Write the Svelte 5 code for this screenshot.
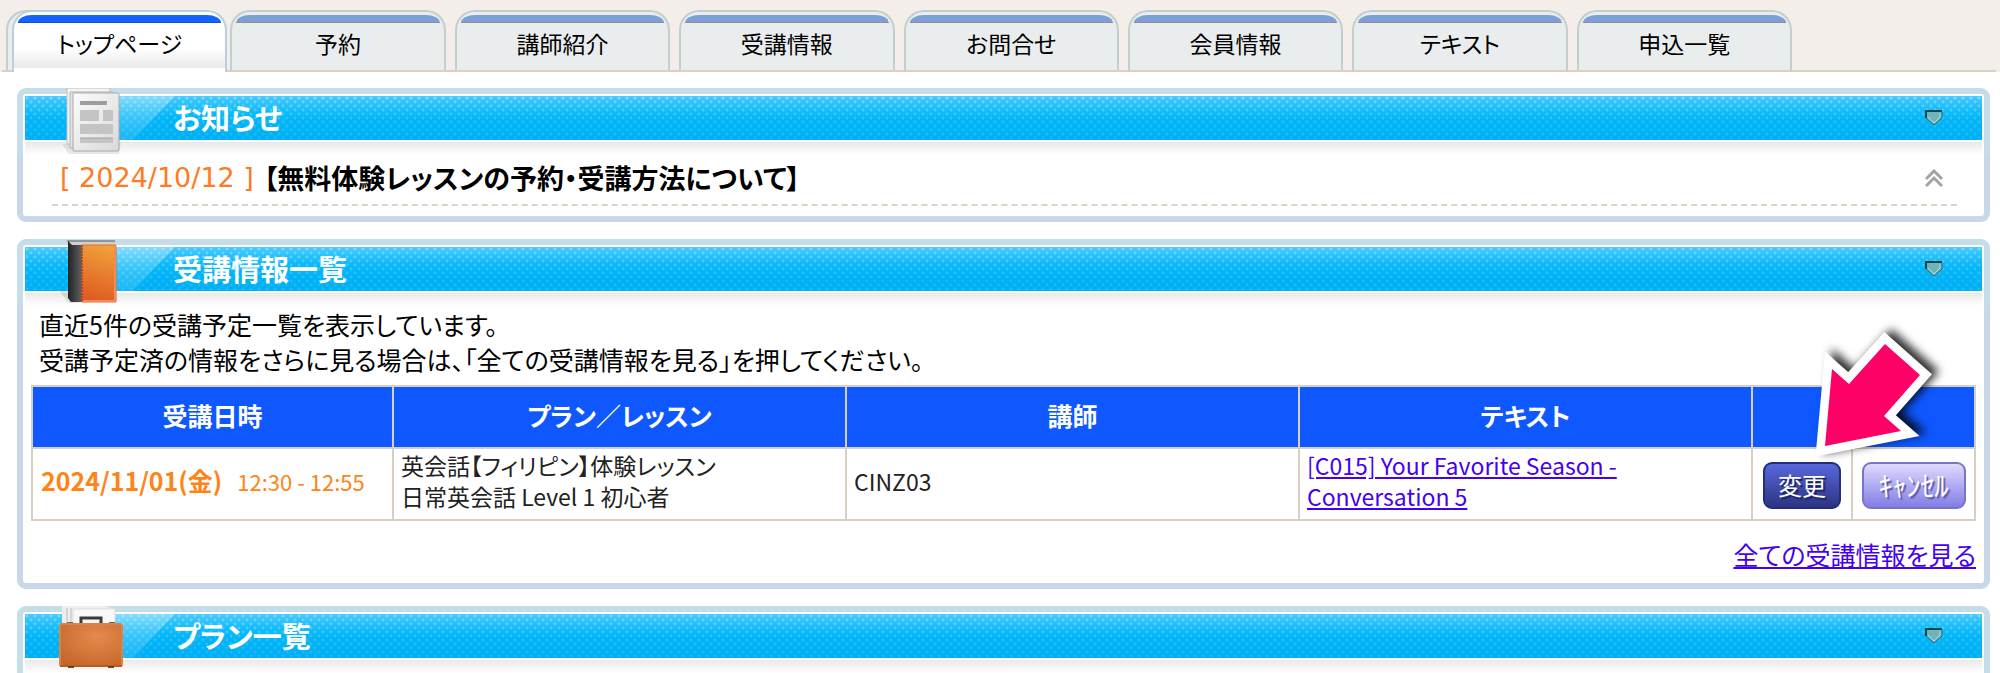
<script lang="ts">
	const tabs = [
		'トップページ',
		'予約',
		'講師紹介',
		'受講情報',
		'お問合せ',
		'会員情報',
		'テキスト',
		'申込一覧'
	];

	const lessons = [
		{
			date: '2024/11/01(金)',
			time: '12:30 - 12:55',
			plan: ['英会話【フィリピン】体験レッスン', '日常英会話 Level 1 初心者'],
			teacher: 'CINZ03',
			text: '[C015] Your Favorite Season - Conversation 5'
		}
	];

	let current = $state(0);
</script>

{#snippet marker()}
	<button type="button" class="marker" aria-label="開閉">
		<svg width="18" height="16" viewBox="0 0 18 16" aria-hidden="true">
			<path d="M1 1H17V8L9 15L1 8Z" fill="#6db4bd" />
			<path d="M1 8V1H17" fill="none" stroke="#14484c" stroke-width="2" />
			<path d="M1 8L9 15L17 8V2" fill="none" stroke="#2b6b6c" stroke-width="1" />
			<path d="M3 7L9 13L15 7V3" fill="none" stroke="#a9dcdc" stroke-width="1" />
		</svg>
	</button>
{/snippet}

<div class="page">
	<header>
		<nav aria-label="メインメニュー">
			{#each tabs as tab, i}
				<div class="slot" class:active={i === current}>
					<a href="#tab{i}" onclick={() => (current = i)} aria-current={i === current ? 'page' : undefined}>
						{tab}
					</a>
				</div>
			{/each}
		</nav>
	</header>

	<main>
		<section class="panel">
			<div class="bar">
				<h2>お知らせ</h2>
				{@render marker()}
			</div>
			<svg class="icon" width="70" height="72" viewBox="0 0 70 72" aria-hidden="true">
				<defs>
					<linearGradient id="paper" x1="0" y1="0" x2="1" y2="1">
						<stop offset="0" stop-color="#fcfcfc" />
						<stop offset="1" stop-color="#d9d9d9" />
					</linearGradient>
				</defs>
				<path d="M7 56L66 54L64 66H14Z" fill="#000" opacity=".08" />
				<path d="M12 0H55V56H12Z" fill="#f4f4f4" stroke="#bdbdbd" />
				<path d="M15 4H58V60H15Z" fill="#e4e4e4" stroke="#b2b2b2" />
				<rect x="18" y="5" width="46" height="58" rx="1" fill="url(#paper)" stroke="#a9a9a9" />
				<path d="M25 13H52V17H25Z" fill="#9d9d9d" />
				<path d="M25 22H44V33H25ZM48 22H58V33H48ZM25 36H58V46H25ZM25 50H58V55H25Z" fill="#c4c4c4" />
				<path d="M25 50H58" stroke="#a2a2a2" />
			</svg>
			<div class="news">
				<span class="news-date">[ 2024/10/12 ]</span>
				<strong>【無料体験レッスンの予約・受講方法について】</strong>
				<button type="button" class="fold" aria-label="閉じる">
					<svg width="18" height="18" viewBox="0 0 18 18" aria-hidden="true">
						<path d="M1 10L9 2L17 10M1 17L9 9L17 17" fill="none" stroke="#a3a3a3" stroke-width="3" />
					</svg>
				</button>
			</div>
		</section>

		<section class="panel">
			<div class="bar">
				<h2>受講情報一覧</h2>
				{@render marker()}
			</div>
			<svg class="icon" width="70" height="72" viewBox="0 0 70 72" aria-hidden="true">
				<defs>
					<linearGradient id="cover" x1=".6" y1="0" x2=".4" y2="1">
						<stop offset="0" stop-color="#f0a03a" />
						<stop offset="1" stop-color="#de5a20" />
					</linearGradient>
					<linearGradient id="spine" x1="0" y1="0" x2="1" y2="0">
						<stop offset="0" stop-color="#222" />
						<stop offset=".4" stop-color="#777" />
						<stop offset="1" stop-color="#444" />
					</linearGradient>
				</defs>
				<path d="M4 52H62V62L14 64Z" fill="#000" opacity=".1" />
				<path d="M13 2H60V7H13Z" fill="#d0d0d0" />
				<path d="M12 2H60" stroke="#555" />
				<path d="M13 2L17 6H60V63H16L13 59Z" fill="url(#spine)" />
				<path d="M27 6H61V63H27Z" fill="url(#cover)" stroke="#e8683b" stroke-width="1" />
				<path d="M27 6V63" stroke="#803010" stroke-dasharray="2 1" />
				<path d="M28 62H60V6" fill="none" stroke="#f28a5a" stroke-width="2" />
			</svg>
			<div class="lessons">
				<p>
					直近5件の受講予定一覧を表示しています。<br />
					受講予定済の情報をさらに見る場合は、「全ての受講情報を見る」を押してください。
				</p>
				<div class="table-wrap">
					<table>
						<colgroup>
							<col class="col-date" />
							<col />
							<col />
							<col />
							<col class="col-change" />
							<col class="col-cancel" />
						</colgroup>
						<thead>
							<tr>
								<th scope="col">受講日時</th>
								<th scope="col">プラン／レッスン</th>
								<th scope="col">講師</th>
								<th scope="col">テキスト</th>
								<th colspan="2"></th>
							</tr>
						</thead>
						<tbody>
							{#each lessons as lesson}
								<tr>
									<td class="when"><b>{lesson.date}</b>{lesson.time}</td>
									<td>{lesson.plan[0]}<br />{lesson.plan[1]}</td>
									<td>{lesson.teacher}</td>
									<td><a class="text-link" href="#text">{lesson.text}</a></td>
									<td class="action"><button type="button" class="btn change">変更</button></td>
									<td class="action"><button type="button" class="btn cancel">ｷｬﾝｾﾙ</button></td>
								</tr>
							{/each}
						</tbody>
					</table>
					<svg class="pointer" width="140" height="140" viewBox="0 0 140 140" aria-hidden="true">
						<path
							d="M26 39L43 54L79 14L114 45L78 86L95 101L19 116Z"
							fill="#fff"
							stroke="#fff"
							stroke-width="17"
						/>
						<path d="M26 39L43 54L79 14L114 45L78 86L95 101L19 116Z" fill="#ff0066" />
					</svg>
				</div>
				<a class="all" href="#lessons">全ての受講情報を見る</a>
			</div>
		</section>

		<section class="panel">
			<div class="bar">
				<h2>プラン一覧</h2>
				{@render marker()}
			</div>
			<svg class="icon" width="70" height="72" viewBox="0 0 70 72" aria-hidden="true">
				<defs>
					<radialGradient id="leather" cx=".6" cy=".3" r=".8">
						<stop offset="0" stop-color="#e58a4c" />
						<stop offset="1" stop-color="#c4662a" />
					</radialGradient>
				</defs>
				<path d="M7 0H49L60 3V24H7Z" fill="#eee" />
				<path d="M12 2V20M16 2V20" stroke="#bbb" />
				<path d="M18 3H60V24H18Z" fill="#f8f8f8" stroke="#ddd" />
				<path d="M26 18V12H46V18" fill="none" stroke="#3b3b3b" stroke-width="3" />
				<path d="M12 16H18V20H12ZM54 16H60V20H54Z" fill="#666" />
				<rect x="5" y="18" width="62" height="42" rx="2" fill="url(#leather)" stroke="#d98347" stroke-width="2" />
				<path d="M5 60H67" stroke="#b85c26" stroke-width="2" />
				<path d="M13 61H19M53 61H59" stroke="#774023" stroke-width="2" />
			</svg>
			<div class="plans"></div>
		</section>
	</main>
</div>

<style>
	:global(body) {
		margin: 0;
		background: #fff;
	}
	.page {
		height: 100vh;
		overflow: hidden;
		color: #000;
		font-family: 'Noto Sans CJK JP', sans-serif;
		font-feature-settings: 'palt';
		font-size: 23px;
	}
	button {
		padding: 0;
		border: 0;
		background: none;
		font: inherit;
		cursor: pointer;
	}
	svg {
		display: block;
	}

	header {
		background: #f4eeeb;
		padding: 10px 4px 0 2px;
	}
	nav {
		display: flex;
		gap: 9px;
		padding: 0 204px 0 4px;
		border-bottom: 2px solid #dbd0c2;
	}
	.slot {
		flex: 1;
		min-width: 0;
		height: 60px;
		box-sizing: border-box;
		border: 2px solid #c3cecd;
		border-bottom: 0;
		border-radius: 20px 20px 0 0;
		background: #e9eded;
	}
	.slot a {
		position: relative;
		display: block;
		height: 58px;
		box-sizing: border-box;
		padding-top: 13px;
		color: #000;
		text-align: center;
		text-decoration: none;
		white-space: nowrap;
		line-height: 36px;
	}
	.slot a::before {
		content: '';
		position: absolute;
		top: 3px;
		left: 4px;
		right: 4px;
		height: 7px;
		border-bottom: 1px solid #8f8f90;
		border-radius: 14px 14px 0 0 / 8px 8px 0 0;
		background: #7b9fd6;
	}
	.active {
		border-right-color: transparent;
	}
	.active a {
		height: 62px;
		margin: -2px -8px 0 4px;
		border: 2px solid #b9d0dc;
		border-bottom: 0;
		border-radius: 20px 20px 0 0;
		background: linear-gradient(#fff 36px, #e9e9e9 56px, #fff 56px);
	}
	.active a::before {
		border-bottom-color: #0d4fe0;
		background: #1463ff;
	}

	main {
		display: flex;
		flex-direction: column;
		gap: 17px;
		padding: 16px 10px 16px 17px;
	}
	.panel {
		position: relative;
		border: 6px solid transparent;
		border-radius: 9px;
		background:
			linear-gradient(#fff, #fff) padding-box,
			linear-gradient(#c5dde8 67px, #c9d7ea 67px) border-box;
	}
	.bar {
		position: relative;
		display: flex;
		align-items: center;
		justify-content: space-between;
		height: 44px;
		margin: 2px 2px 0;
		padding: 0 39px 0 148px;
		background:
			linear-gradient(#fff0 0, #00b0f6aa 80%),
			radial-gradient(circle at 2px 2px, #ffffff50 1px, #fff0 2px) 0 0 / 8px 8px,
			radial-gradient(circle at 6px 6px, #ffffff50 1px, #fff0 2px) 0 0 / 8px 8px,
			linear-gradient(#4bcaff, #00bbfa 50%, #00aef4);
	}
	/* glossy wedge beside the icon */
	.bar::before {
		content: '';
		position: absolute;
		top: 0;
		left: 90px;
		width: 60px;
		height: 44px;
		background: linear-gradient(#ffffff50, #ffffff18);
		clip-path: polygon(0 0, 100% 0, 30% 100%, 0 100%);
	}
	.bar::after {
		content: '';
		position: absolute;
		top: 46px;
		left: 0;
		right: 0;
		height: 13px;
		background: linear-gradient(#e9e9e9, #fff);
	}
	h2 {
		margin: 0;
		color: #fff;
		font-size: 29px;
		line-height: 42px;
		padding-bottom: 2px;
	}
	.icon {
		position: absolute;
		top: -6px;
		left: 32px;
	}

	.news {
		position: relative;
		display: flex;
		align-items: center;
		margin: 0 27px 10px 29px;
		padding: 12px 14px 0 8px;
		border-bottom: 2px dashed #ddd2c6;
		font-size: 27px;
		line-height: 52px;
	}
	.news-date {
		margin-right: 10px;
		color: #ff7a22;
		font-family: 'DejaVu Sans', sans-serif;
	}
	.fold {
		margin-left: auto;
	}

	.lessons {
		padding: 16px 8px 11px;
		font-size: 25px;
		line-height: 35px;
	}
	.lessons p {
		margin: 0 8px 8px;
	}
	.table-wrap {
		position: relative;
		margin-bottom: 16px;
	}
	table {
		width: 100%;
		table-layout: fixed;
		border-collapse: collapse;
	}
	.col-date {
		width: 361px;
	}
	.col-change {
		width: 100px;
	}
	.col-cancel {
		width: 123px;
	}
	th,
	td {
		border: 2px solid #d9cfc1;
	}
	th {
		height: 56px;
		padding: 0 0 4px;
		background: #0f57ff;
		color: #fff;
		font-size: 25px;
	}
	td {
		padding: 1px 7px 7px;
		color: #222;
		font-size: 23px;
		line-height: 31px;
	}
	td.when {
		padding-left: 8px;
		color: #ff8316;
		font-size: 22px;
		white-space: nowrap;
	}
	.when b {
		margin-right: 15px;
		font-size: 25px;
	}
	td.action {
		padding: 2px 0 0;
		text-align: center;
	}
	.text-link,
	.all {
		color: #4400f0;
		text-decoration: underline;
	}
	.text-link {
		display: block;
		max-width: 340px;
	}
	.all {
		display: block;
		width: fit-content;
		margin-left: auto;
	}
	.btn {
		height: 47px;
		border-radius: 9px;
		color: #fff;
		vertical-align: middle;
		line-height: 40px;
	}
	.change {
		width: 78px;
		border: 2px solid #252c7a;
		background: linear-gradient(#5868dc, #2c3482);
		font-size: 24px;
		text-shadow: 2px 2px 1px #1b2266;
	}
	.cancel {
		width: 104px;
		border: 2px solid #7a74c8;
		background: linear-gradient(#dedafe, #837de6);
		font-size: 28px;
		text-shadow: 2px 2px 1px #5f5aa8;
	}
	.pointer {
		position: absolute;
		top: -55px;
		right: 30px;
		overflow: visible;
		filter: drop-shadow(7px -3px 5px #000000d0);
		pointer-events: none;
	}
	.plans {
		height: 60px;
	}
</style>
